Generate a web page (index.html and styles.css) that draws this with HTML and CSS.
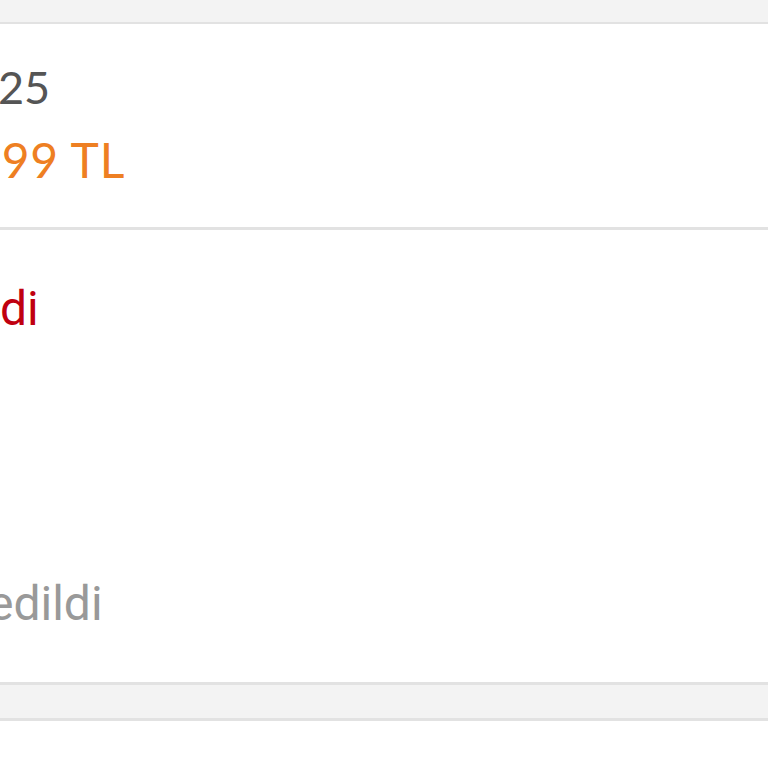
FILE: index.html
```
<!DOCTYPE html>
<html lang="tr">
<head>
    <meta charset="UTF-8">
    <meta name="viewport" content="width=device-width, initial-scale=1.0">
    <title>Sipariş</title>
    <link rel="stylesheet" href="styles.css">
</head>
<body>
    <div class="topStrip"></div>

    <div class="orderCard">
        <div class="orderDate">25</div>
        <div class="orderPrice">,99 TL</div>
    </div>

    <div class="statusCard">
        <div class="statusTitle">di</div>
        <div class="statusNote">edildi</div>
    </div>

    <div class="gapStrip"></div>
    <div class="bottomArea"></div>
</body>
</html>
```

FILE: styles.css
```
body, html {
    margin: 0;
    background-color: #ffffff;
    overflow: hidden;
}

.topStrip {
    height: 22px;
    background-color: #f3f3f3;
    border-bottom: 2px solid #e2e2e2;
}

.orderCard {
    height: 206px;
    border-bottom: 3px solid #e2e2e2;
    font-family: Lato, "Noto Sans", sans-serif;
    box-sizing: border-box;
    padding-top: 38px;
}

.orderDate {
    font-size: 45px;
    line-height: 50px;
    color: #555555;
    margin-left: -2px;
}

.orderPrice {
    font-size: 48px;
    line-height: 50px;
    letter-spacing: 0.8px;
    color: #ee7f22;
    margin-top: 23px;
    margin-left: -10px;
}

.statusCard {
    height: 455px;
    border-bottom: 3px solid #e2e2e2;
    box-sizing: border-box;
    padding-top: 51px;
    font-family: Roboto, "Noto Sans", sans-serif;
}

.statusTitle {
    font-size: 48px;
    line-height: 56px;
    color: #c00010;
    margin-left: 0;
}

.statusNote {
    font-size: 48px;
    line-height: 56px;
    color: #999999;
    margin-top: 239px;
    margin-left: -12px;
}

.gapStrip {
    height: 33px;
    background-color: #f3f3f3;
    border-bottom: 3px solid #e2e2e2;
}

.bottomArea {
    height: 60px;
}
```
